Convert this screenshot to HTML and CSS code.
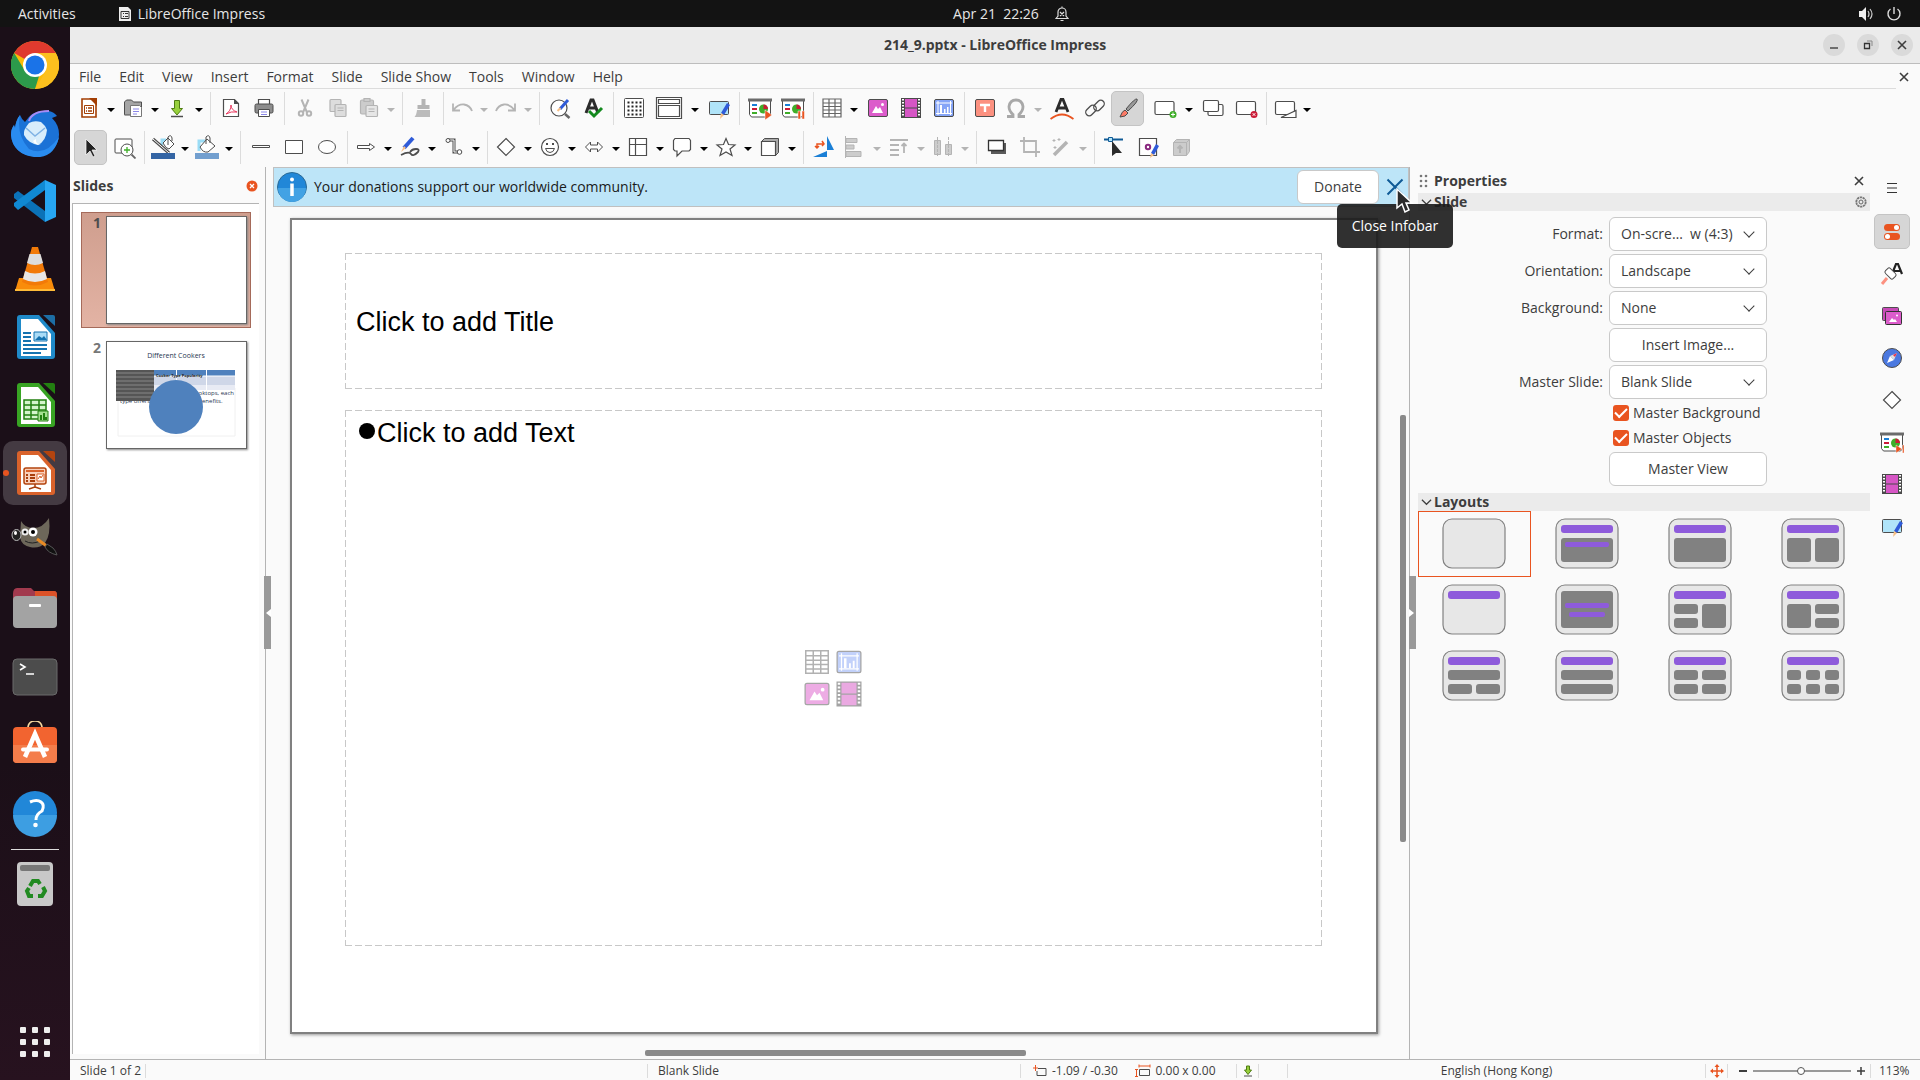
FILE: index.html
```html
<!DOCTYPE html>
<html lang="en">
<head>
  <meta charset="UTF-8" />
  <meta name="viewport" content="width=device-width, initial-scale=1.0" />
  <title>214_9.pptx - LibreOffice Impress</title>
  <link rel="stylesheet" href="styles.css">
</head>
<body>
  <!-- shared icons -->
  <svg class="defs" width="0" height="0">
    <defs>
      <symbol id="i-table" viewBox="0 0 24 24"><path d="M3 3h18v18H3zM3 7h18M3 10.500h18M3 14h18M3 17.500h18M9 3v18M15 3v18" fill="#fff" stroke="#666" stroke-width="1.200"/></symbol>
      <symbol id="i-image" viewBox="0 0 24 24"><rect x="2.500" y="3.500" width="19" height="17" rx="1.500" fill="#dc5ccb" stroke="#4d4d4d"/><path d="M6 17l4-7 2 3 2-2 3 6z" fill="#fff"/><circle cx="16.500" cy="8.500" r="1.500" fill="#fff"/></symbol>
      <symbol id="i-film" viewBox="0 0 24 24"><path d="M2 2h20v20H2z" fill="#4a4a4a"/><path d="M6 3h12v8.500H6zM6 12.500h12V21H6z" fill="#d656c5"/><path d="M4 3v18M20 3v18" stroke="#fff" stroke-width="2" stroke-dasharray="1.500 1.500"/></symbol>
      <symbol id="i-chart" viewBox="0 0 24 24"><rect x="2.500" y="3.500" width="19" height="17" rx="1.500" fill="#86a5f7" stroke="#4d4d4d"/><path d="M4 7h16M4 17.500h16M6 5v14M18.500 5v14" stroke="#fff" fill="none"/><path d="M8 17V9h2v8M12 17v-4h1.500v4M15 17v-6h1.500v6" fill="#fff"/></symbol>
      <symbol id="i-master" viewBox="0 0 24 24"><rect x="2.500" y="5.500" width="19" height="13" rx="1" fill="#b0e4f9" stroke="#4d4d4d"/><path d="M20 7l3 2-6 10-3-2z" fill="#2f5bd8"/><path d="M14 17l3 2-4 4z" fill="#f7bf85"/></symbol>
      <symbol id="i-screen" viewBox="0 0 24 24"><path d="M1.500 3.500v15l2 2.500h17l2-2.500v-15" fill="#fff" stroke="#4d4d4d"/><path d="M0 2.500h24v3H0z" fill="#6b6b6b"/><path d="M4 8h5v2H4z" fill="#1a7fd6"/><path d="M4 12h5v2H4z" fill="#cb1b37"/><path d="M4 16h5v2H4z" fill="#3fae29"/><circle cx="15.500" cy="13" r="4.500" fill="#3fae29"/><path d="M15.500 13V8.500A4.500 4.500 0 0 1 20 13z" fill="#cb1b37"/></symbol>
      <symbol id="i-diamond" viewBox="0 0 24 24"><path d="M12 3.500l8.500 8.500-8.500 8.500L3.500 12z" fill="#fff" stroke="#4d4d4d" stroke-width="1.200"/></symbol>
      <symbol id="i-close" viewBox="0 0 10 10"><path d="M1 1l8 8M9 1L1 9" stroke="#3d3d3d" stroke-width="1.600"/></symbol>
      <symbol id="i-chevron" viewBox="0 0 12 8"><path d="M1 1.500l5 5 5-5" fill="none" stroke="#3d3d3d" stroke-width="1.300"/></symbol>
      <symbol id="i-bin" viewBox="0 0 64 51"><rect x="1" y="1" width="62" height="49" rx="9" fill="#e7e7e7" stroke="#818181" stroke-width="1.200"/></symbol>
    </defs>
  </svg>

  <header class="topbar">
    <div class="topbar-left">
      <button>Activities</button>
      <button class="app-menu">
        <svg width="14" height="16" viewBox="0 0 14 16"><path d="M1 1h9l3 3v11H1z" fill="#eee"/><path d="M3 5.500h8v7H3z" fill="#eee" stroke="#333"/><path d="M5 7.500h1M7 7.500h3M5 10.500h1M7 10.500h3" stroke="#333"/></svg>
        LibreOffice Impress
      </button>
    </div>
    <button class="clock">Apr 21&nbsp; 22:26
      <svg width="14" height="16" viewBox="0 0 14 16" fill="none" stroke="#ddd" stroke-width="1.200"><path d="M1 12.500l2-2.500V6a4 4 0 0 1 8 0v4l2 2.500zM5.500 14.500h3M7 2V.500M5 6l4 4M9 6l-4 4"/></svg>
    </button>
    <div class="topbar-right">
      <svg width="16" height="16" viewBox="0 0 16 16"><path d="M1 5h3l4-4v14l-4-4H1z" fill="#eee"/><path d="M10 5q2 3 0 6M12 3q4 5 0 10" fill="none" stroke="#ccc" stroke-width="1.200"/></svg>
      <svg width="16" height="16" viewBox="0 0 16 16" fill="none" stroke="#ddd" stroke-width="1.400"><path d="M4.500 3a6 6 0 1 0 7 0M8 1v7"/></svg>
    </div>
  </header>

  <div class="desktop">
    <nav class="dock">
      <a href="#" aria-label="Chrome"><svg viewBox="0 0 48 48"><circle cx="24" cy="24" r="24" fill="#fbbc09"/><path d="M24 24L3.200 12A24 24 0 0 1 44.800 12z" fill="#df3a2e"/><path d="M3.200 12L14 30l10 4 5-2-5 16A24 24 0 0 1 3.200 12z" fill="#2c9a4b"/><path d="M24 12h20.800A24 24 0 0 1 24 48l11-18z" fill="#fcc01e"/><circle cx="24" cy="24" r="12" fill="#fff"/><circle cx="24" cy="24" r="9.500" fill="#1a73e8"/></svg></a>
      <a href="#" aria-label="Thunderbird"><svg viewBox="0 0 48 48"><path d="M9 6q2 5 5 7Q22 0 38 2q5 1 8 5l-5 2q7 7 7 16A24 22 0 0 1 0 26q0-6 3-10l1 3Q5 11 9 6z" fill="#1b72d6"/><path d="M9 6Q5 26 18 40q16 8 30-12-5 22-25 20Q2 45 0 26q0-6 3-10l1 3Q5 11 9 6z" fill="#2a8cf0"/><path d="M18 12q3-10 20-10" fill="none" stroke="#a88cf5" stroke-width="2"/><path d="M18 14q-6 7-5 12 4 8 14 10 8-4 9-15-2-5-6-8-7-2-12 1z" fill="#d8edfb"/><path d="M15 19l9 8 10-8" fill="none" stroke="#7fb2e4" stroke-width="1.500"/><path d="M22 32q2 4 8 4-6-1-5-6z" fill="#fff"/></svg></a>
      <a href="#" aria-label="Visual Studio Code"><svg viewBox="0 0 48 48"><path d="M3 17l4-3 27 20v11L3 21z" fill="#0b72b8"/><path d="M3 29l4 4 27-20V3L3 26z" fill="#1089d3"/><path d="M34 3l11 5v32l-11 5z" fill="#27a6f2"/></svg></a>
      <a href="#" aria-label="VLC"><svg viewBox="0 0 48 48"><path d="M8 33h32l4 13H4z" fill="#f98c0a"/><path d="M21 2h6l10 35q-13 7-26 0z" fill="#f27a08"/><path d="M18.500 9h11l2.500 9q-8 4-16 0z" fill="#ddd"/><path d="M14 26q10 5 20 0l2 8q-12 6-24 0z" fill="#e6e6e6"/><path d="M4 44h40v2H4z" fill="#ffbb38"/></svg></a>
      <a href="#" aria-label="Writer"><svg viewBox="0 0 48 48"><path d="M9 2h19l16 18v23q0 3-3 3H9q-3 0-3-3V5q0-3 3-3z" fill="#1f8ac9"/><path d="M10 6h17l13 15v22H10z" fill="#fff"/><path d="M32 2h10q2 0 2 2v9z" fill="#1d6ea5"/><path d="M12 20h8M12 24h8M12 28h8M12 32h24M12 36h24M12 40h18" stroke="#1573b0" stroke-width="2"/><path d="M23 19h13v9H23z" fill="#aadcf7" stroke="#1573b0"/><path d="M24 27l4-4 3 2 2-2 3 4z" fill="#1573b0"/></svg></a>
      <a href="#" aria-label="Calc"><svg viewBox="0 0 48 48"><path d="M9 2h19l16 18v23q0 3-3 3H9q-3 0-3-3V5q0-3 3-3z" fill="#38a423"/><path d="M10 6h17l13 15v22H10z" fill="#fff"/><path d="M32 2h10q2 0 2 2v9z" fill="#238011"/><path d="M13 19h22v19H13zM13 24h22M13 29h22M13 34h22M20 19v19M28 19v19" fill="#d5f5cc" stroke="#238011" stroke-width="1.500"/><path d="M27 30h10v10H27z" fill="#a5e090" stroke="#238011"/><path d="M30 39v-5M33 39v-7M35 39v-3" stroke="#238011" stroke-width="2"/></svg></a>
      <a href="#" class="running" aria-label="Impress"><svg viewBox="0 0 48 48"><path d="M9 2h19l16 18v23q0 3-3 3H9q-3 0-3-3V5q0-3 3-3z" fill="#d9622b"/><path d="M10 6h17l13 15v22H10z" fill="#fff"/><path d="M32 2h10q2 0 2 2v9z" fill="#b3440f"/><rect x="13" y="19" width="22" height="16" rx="2" fill="#f9d0bb" stroke="#b3440f" stroke-width="1.500"/><path d="M15 22h18" stroke="#d9622b" stroke-width="2"/><path d="M19 26h5M19 29h5M19 32h5M15 26h2M15 29h2M15 32h2" stroke="#a83e0c" stroke-width="2"/><path d="M26 25h7v7h-7zM27 30l2-3 1 2 2-3" fill="#fff" stroke="#d9622b"/><path d="M24 35v3l-6 2M24 38l6 2" fill="none" stroke="#a83e0c" stroke-width="1.500"/></svg></a>
      <a href="#" aria-label="GIMP"><svg viewBox="0 0 48 48"><path d="M10 4q4 7 12 7 10 0 16-10 2 17-4 25-6 6-15 4-9-2-10-10z" fill="#6d675a"/><circle cx="14" cy="15" r="3.500" fill="#eee"/><circle cx="22" cy="15" r="4.500" fill="#fff"/><circle cx="14" cy="15" r="1.500"/><circle cx="22" cy="15" r="2"/><ellipse cx="5.500" cy="18" rx="4.500" ry="5.500" fill="#222" stroke="#bbb"/><ellipse cx="4.500" cy="16" rx="1.500" ry="2" fill="#fff"/><path d="M14 24q7 4 15 0" fill="none" stroke="#222"/><path d="M26 22l11 8" stroke="#e78a25" stroke-width="3"/><path d="M36 27l6 4q3 3 4 7-9-2-12-8z" fill="#111" stroke="#555"/></svg></a>
      <a href="#" aria-label="Files"><svg viewBox="0 0 48 48"><path d="M2 9q0-6 4-6h14l3 3h20q3 0 3 4v10H2z" fill="#a23a4e"/><path d="M24 6h19q3 0 3 4v5H24z" fill="#dc5228"/><rect x="2" y="11" width="44" height="32" rx="4" fill="#a3a3a3"/><rect x="18" y="19" width="12" height="3" rx="1" fill="#fff"/></svg></a>
      <a href="#" aria-label="Terminal"><svg viewBox="0 0 48 48"><rect x="2" y="6" width="44" height="36" rx="4" fill="#4c4c4c" stroke="#6a6a6a"/><path d="M9 11l5 3-5 3M15 21h8" fill="none" stroke="#fff" stroke-width="1.600"/></svg></a>
      <a href="#" aria-label="Software"><svg viewBox="0 0 48 48"><path d="M17 10V6q1-6 7-6t7 6v4" fill="none" stroke="#f5d8a0" stroke-width="1.600"/><rect x="2" y="6" width="44" height="36" rx="4" fill="#f26430"/><path d="M2 24h44v14q0 4-4 4H6q-4 0-4-4z" fill="#f47d4b"/><path d="M14 36l10-23 10 23" fill="none" stroke="#fff" stroke-width="4.500"/><path d="M12 28.500h24" stroke="#fff" stroke-width="4" stroke-linecap="round"/></svg></a>
      <a href="#" aria-label="Help"><svg viewBox="0 0 48 48"><circle cx="24" cy="24" r="22" fill="#2187d8"/><path d="M2 26h44a22 22 0 0 1-44 0z" fill="#3d9ee2"/><path d="M19 13q7-3 11 0t1 9q-6 3-6 9" fill="none" stroke="#fff" stroke-width="3"/><circle cx="24.500" cy="36" r="2.300" fill="#fff"/></svg></a>
      <hr>
      <a href="#" aria-label="Trash"><svg viewBox="0 0 48 48"><rect x="6" y="2" width="36" height="44" rx="4" fill="#c8c8c8"/><rect x="9" y="5" width="30" height="6" rx="2" fill="#777"/><g fill="none" stroke="#218a21" stroke-width="4"><path d="M19 26l3-5h5l2 3M32 27l2 4-3 5h-4M22 36h-4l-2-5 2-3"/></g></svg></a>
      <a href="#" class="apps" aria-label="Show Applications"><svg viewBox="0 0 48 48"><g fill="#eee"><rect x="9" y="9" width="6" height="6" rx="1"/><rect x="21" y="9" width="6" height="6" rx="1"/><rect x="33" y="9" width="6" height="6" rx="1"/><rect x="9" y="21" width="6" height="6" rx="1"/><rect x="21" y="21" width="6" height="6" rx="1"/><rect x="33" y="21" width="6" height="6" rx="1"/><rect x="9" y="33" width="6" height="6" rx="1"/><rect x="21" y="33" width="6" height="6" rx="1"/><rect x="33" y="33" width="6" height="6" rx="1"/></g></svg></a>
    </nav>

    <div class="window">
      <div class="titlebar">
        <h1>214_9.pptx - LibreOffice Impress</h1>
        <div class="window-buttons">
          <button aria-label="Minimize"><svg width="10" height="10" viewBox="0 0 10 10"><path d="M1 8h8" stroke="#333" stroke-width="1.300"/></svg></button>
          <button aria-label="Restore"><svg width="10" height="10" viewBox="0 0 10 10"><path d="M1.500 3.500h5v5h-5z" fill="none" stroke="#333" stroke-width="1.300"/><path d="M4 1h5v5" fill="none" stroke="#888"/></svg></button>
          <button aria-label="Close"><svg width="10" height="10"><use href="#i-close"/></svg></button>
        </div>
      </div>

      <div class="menubar">
        <div class="menus">
          <button>File</button><button>Edit</button><button>View</button><button>Insert</button><button>Format</button><button>Slide</button><button>Slide Show</button><button>Tools</button><button>Window</button><button>Help</button>
        </div>
        <button class="close-doc" aria-label="Close Document"><svg width="10" height="10"><use href="#i-close"/></svg></button>
      </div>

      <!-- standard toolbar -->
      <div class="toolbar">
        <div class="split"><button aria-label="New"><svg viewBox="0 0 24 24"><path d="M5 3h10l4 4v14H5z" fill="#fff" stroke="#a33e03" stroke-width="1.600"/><path d="M12 2h8v8z" fill="#a33e03"/><path d="M7.500 9.500h9v8h-9z" fill="none" stroke="#a33e03"/><path d="M9 12h1M11 12h4M9 15h1M11 15h4" stroke="#a33e03" stroke-width="1.400"/></svg></button><button class="arrow" aria-label="New menu"></button></div>
        <div class="split"><button aria-label="Open"><svg viewBox="0 0 24 24"><path d="M3.500 18.500V6l2-2h5l2 2h8v13h-17z" fill="#a5a5a5" stroke="#4d4d4d"/><path d="M9.500 9.500h9l2 2v9h-11z" fill="#fff" stroke="#777"/><path d="M12 13h6M12 15.500h6M12 18h4" stroke="#8b86e8"/></svg></button><button class="arrow" aria-label="Open menu"></button></div>
        <div class="split"><button aria-label="Save"><svg viewBox="0 0 24 24"><path d="M9.500 4.500h5v8h3L12 19l-5.500-6.500h3z" fill="#97d03c" stroke="#4f7d12"/><path d="M6 20.500h12" stroke="#4d4d4d" stroke-width="1.500"/></svg></button><button class="arrow" aria-label="Save menu"></button></div>
        <i class="sep"></i>
        <button aria-label="Export as PDF"><svg viewBox="0 0 24 24"><path d="M4.500 3.500h11l4 4v13h-15z" fill="#fff" stroke="#4d4d4d" stroke-width="1.200"/><path d="M15 3l5 5h-5z" fill="#4d4d4d"/><path d="M7 18q5-3 5-9 0 5 6 7-6-1-11 2z" fill="none" stroke="#e8365d"/></svg></button>
        <button aria-label="Print"><svg viewBox="0 0 24 24"><path d="M6.500 9V3.500h11V9" fill="#fff" stroke="#4d4d4d" stroke-width="1.200"/><rect x="3" y="8" width="18" height="9" rx="1.500" fill="#8d8d8d" stroke="#4d4d4d"/><path d="M6.500 13.500h11v7h-11z" fill="#fff" stroke="#4d4d4d"/><path d="M9 16h6M9 18.500h6" stroke="#8b86e8"/></svg></button>
        <i class="sep"></i>
        <button disabled aria-label="Cut"><svg viewBox="0 0 24 24" fill="none" stroke="#b4b4b4" stroke-width="2"><path d="M8.500 3.500l5.500 13M15.500 3.500L10 16.500"/><circle cx="8" cy="17.500" r="2.200"/><circle cx="16" cy="17.500" r="2.200"/></svg></button>
        <button disabled aria-label="Copy"><svg viewBox="0 0 24 24" fill="#ddd" stroke="#b4b4b4" stroke-width="1.200"><rect x="4" y="3.500" width="11" height="12" rx="1"/><rect x="9" y="8.500" width="11" height="12" rx="1"/><path d="M11.500 12h6M11.500 14.500h6"/></svg></button>
        <div class="split off"><button disabled aria-label="Paste"><svg viewBox="0 0 24 24" fill="#ccc" stroke="#b4b4b4" stroke-width="1.200"><rect x="3.500" y="4" width="13" height="14" rx="1.500"/><path d="M7 2.500h6v3H7z"/><rect x="9" y="9.500" width="11.500" height="11" rx="1" fill="#e6e6e6"/><path d="M11.500 13h6M11.500 15.500h6"/></svg></button><button disabled class="arrow" aria-label="Paste menu"></button></div>
        <i class="sep"></i>
        <button disabled aria-label="Clone Formatting"><svg viewBox="0 0 24 24"><path d="M10.500 3h4v6h4v4h-12V9h4z" fill="#b4b4b4"/><path d="M6 14h13v7H3.500q2-2 2.500-7z" fill="#bbb"/></svg></button>
        <i class="sep"></i>
        <div class="split off"><button disabled aria-label="Undo"><svg viewBox="0 0 24 24" fill="none" stroke="#b4b4b4" stroke-width="1.800"><path d="M3 7.500v7h7M3.500 14Q8 8 14 8.500q6 1 8 6.500"/></svg></button><button disabled class="arrow" aria-label="Undo menu"></button></div>
        <div class="split off"><button disabled aria-label="Redo"><svg viewBox="0 0 24 24" fill="none" stroke="#b4b4b4" stroke-width="1.800"><path d="M21 7.500v7h-7M20.500 14Q16 8 10 8.500q-6 1-8 6.500"/></svg></button><button disabled class="arrow" aria-label="Redo menu"></button></div>
        <i class="sep"></i>
        <button aria-label="Find and Replace"><svg viewBox="0 0 24 24"><circle cx="11" cy="12" r="8" fill="#fff" stroke="#4d4d4d" stroke-width="1.200"/><path d="M17 18l4.500 4" stroke="#666" stroke-width="2.400"/><path d="M20 4l-8 9" stroke="#2f5bd8" stroke-width="3"/><path d="M12.500 12l-3 3" stroke="#f7bf85" stroke-width="2"/></svg></button>
        <button aria-label="Spelling"><svg viewBox="0 0 24 24"><path d="M5 17l5-13h2l5 13M7 12h8" fill="none" stroke="#2b2b2b" stroke-width="3"/><path d="M8 15l5 5 8-8" fill="none" stroke="#138a1e" stroke-width="3"/></svg></button>
        <i class="sep"></i>
        <button aria-label="Display Grid"><svg viewBox="0 0 24 24"><rect x="2.500" y="2.500" width="19" height="19" rx="1" fill="#fff" stroke="#4d4d4d"/><path d="M5.500 6.500h14M5.500 10.500h14M5.500 14.500h14M5.500 18.500h14" stroke="#222" stroke-width="2" stroke-dasharray="2 2"/></svg></button>
        <div class="split wide"><button aria-label="Display Views"><svg class="big" viewBox="0 0 28 24" fill="#fff" stroke="#4d4d4d" stroke-width="1.200"><path d="M1.500 1.500h25v21h-25zM3.500 3.500h21v4h-21zM3.500 9.500h21v11h-21z"/></svg></button><button class="arrow" aria-label="Views menu"></button></div>
        <button aria-label="Master Slide"><svg><use href="#i-master"/></svg></button>
        <i class="sep"></i>
        <button aria-label="Start from First Slide"><svg viewBox="0 0 24 24"><use href="#i-screen"/><path d="M17 14l7 5-7 5z" fill="#e95420" stroke="#fff" stroke-width=".5"/></svg></button>
        <button aria-label="Start from Current Slide"><svg viewBox="0 0 24 24"><use href="#i-screen"/><path d="M17 15h2.500v8H17zM21 15h2.500v8H21z" fill="#e95420" stroke="#fff" stroke-width=".5"/></svg></button>
        <i class="sep"></i>
        <div class="split"><button aria-label="Table"><svg><use href="#i-table"/></svg></button><button class="arrow" aria-label="Table menu"></button></div>
        <button aria-label="Image"><svg><use href="#i-image"/></svg></button>
        <button aria-label="Audio or Video"><svg><use href="#i-film"/></svg></button>
        <button aria-label="Chart"><svg><use href="#i-chart"/></svg></button>
        <i class="sep"></i>
        <button aria-label="Text Box"><svg viewBox="0 0 24 24"><rect x="2.500" y="3.500" width="19" height="17" rx="1.500" fill="#fc9180" stroke="#4d4d4d"/><path d="M7 9h10M12 9v7" stroke="#fff" stroke-width="2.400"/></svg></button>
        <div class="split off"><button disabled aria-label="Special Character"><svg viewBox="0 0 24 24"><path d="M3 20.500h6v-2Q5 15 5 10.500 6 4 12 4t7 6.500q0 4.500-4 8v2h6" fill="none" stroke="#a8a8a8" stroke-width="2.800"/></svg></button><button disabled class="arrow" aria-label="Special Character menu"></button></div>
        <button aria-label="Fontwork"><svg viewBox="0 0 24 24"><path d="M6 16l5-12.500h2L18 16M8 12h8" fill="none" stroke="#2b2b2b" stroke-width="2.800"/><path d="M.500 23q11.500-9 23 0" fill="none" stroke="#e95420" stroke-width="1.800"/></svg></button>
        <button aria-label="Hyperlink"><svg viewBox="0 0 24 24" fill="none" stroke="#4d4d4d" stroke-width="1.300"><rect x="2" y="11" width="12" height="7" rx="3.500" transform="rotate(-45 8 14.500)"/><rect x="10" y="6" width="12" height="7" rx="3.500" transform="rotate(-45 16 9.500)"/></svg></button>
        <button class="pressed" aria-label="Show Draw Functions"><svg viewBox="0 0 24 24"><path d="M21 3q2 2-9 12l-2-2Q19 2 21 3z" fill="#999" stroke="#4d4d4d"/><path d="M9 14l3 3q-2 4-8 4 2-6 5-7z" fill="#fc7a66" stroke="#4d4d4d"/></svg></button>
        <div class="split wide"><button aria-label="New Slide"><svg class="big" viewBox="0 0 28 24"><rect x="6" y="5.500" width="19" height="13" rx="1.500" fill="#fff" stroke="#4d4d4d" stroke-width="1.200"/><circle cx="24" cy="18.500" r="3.500" fill="#3fae29"/><path d="M24 16.500v4M22 18.500h4" stroke="#fff"/></svg></button><button class="arrow" aria-label="New Slide menu"></button></div>
        <button aria-label="Duplicate Slide"><svg viewBox="0 0 24 24" fill="#fff" stroke="#4d4d4d" stroke-width="1.200"><rect x="7" y="8.500" width="15" height="11" rx="1.500"/><rect x="2.500" y="4.500" width="15" height="11" rx="1.500"/></svg></button>
        <button aria-label="Delete Slide"><svg viewBox="0 0 24 24"><rect x="2.500" y="5.500" width="19" height="13" rx="1.500" fill="#fff" stroke="#4d4d4d" stroke-width="1.200"/><circle cx="20" cy="18.500" r="3.500" fill="#cb1b37"/><path d="M18.700 17.200l2.600 2.600M21.300 17.200l-2.600 2.600" stroke="#fff"/></svg></button>
        <i class="sep"></i>
        <div class="split"><button aria-label="Slide Layout"><svg viewBox="0 0 24 24" fill="#fff" stroke="#4d4d4d" stroke-width="1.200"><rect x="2.500" y="5.500" width="19" height="13" rx="1.500"/><path d="M8 21.500l15-7v7z"/></svg></button><button class="arrow" aria-label="Layout menu"></button></div>
      </div>

      <!-- drawing toolbar -->
      <div class="toolbar">
        <button class="pressed" aria-label="Select"><svg viewBox="0 0 24 24"><path d="M7 4v16l4-4 3 6 2-1-3-6h5z" fill="#222" stroke="#fff" stroke-width=".7"/></svg></button>
        <button aria-label="Zoom and Pan"><svg viewBox="0 0 24 24"><rect x="3" y="4" width="17" height="14" rx="1" fill="#fff" stroke="#4d4d4d"/><circle cx="15" cy="15" r="6" fill="#fff" stroke="#4d4d4d"/><path d="M15 12v6M12 15h6" stroke="#3fae29" stroke-width="1.300"/><path d="M19.500 19.500l4 4" stroke="#666" stroke-width="1.800"/></svg></button>
        <i class="sep"></i>
        <div class="split"><button aria-label="Line Color"><svg viewBox="0 0 24 24"><path d="M11 10V5h4" fill="none" stroke="#9adcf5" stroke-width="3"/><path d="M2 4l16 14" stroke="#4d4d4d" stroke-width="3"/><path d="M2 4l16 14" stroke="#fff"/><path d="M12 8l5-5 6 6-5 5q-3 0-6-6zM17 10V2q3-3 4 1v3" fill="#fff" stroke="#4d4d4d"/><path d="M0 18h24v6H0z" fill="#3465a4"/></svg></button><button class="arrow" aria-label="Line Color menu"></button></div>
        <div class="split"><button aria-label="Fill Color"><svg viewBox="0 0 24 24"><path d="M4 16V6h6" fill="none" stroke="#9adcf5" stroke-width="3"/><path d="M5 12l7-8 8 7-7 6q-5 1-8-5zM11 9V2q3-3 4 1v5" fill="#fff" stroke="#4d4d4d"/><path d="M0 18h24v6H0z" fill="#729fcf"/></svg></button><button class="arrow" aria-label="Fill Color menu"></button></div>
        <i class="sep"></i>
        <button aria-label="Insert Line"><svg viewBox="0 0 24 24"><path d="M3.500 10.500h17v2h-17z" fill="#fff" stroke="#4d4d4d"/></svg></button>
        <button aria-label="Rectangle"><svg viewBox="0 0 24 24"><path d="M3.500 5.500h17v13h-17z" fill="#fff" stroke="#4d4d4d"/></svg></button>
        <button aria-label="Ellipse"><svg viewBox="0 0 24 24"><ellipse cx="12" cy="12" rx="8.500" ry="6.500" fill="#fff" stroke="#4d4d4d"/></svg></button>
        <i class="sep"></i>
        <div class="split"><button aria-label="Lines and Arrows"><svg viewBox="0 0 24 24"><path d="M3.500 10.500h12v-2l5 3.500-5 3.500v-2h-12z" fill="#fff" stroke="#4d4d4d"/></svg></button><button class="arrow" aria-label="Lines menu"></button></div>
        <div class="split"><button aria-label="Curves"><svg viewBox="0 0 24 24"><path d="M15 3L6 13" stroke="#2f5bd8" stroke-width="4"/><path d="M6 11l2 2-5 4z" fill="#f7bf85"/><path d="M3 20q8-4 10-1t7-2q2-3-2-3t-6 3" fill="none" stroke="#4d4d4d" stroke-width="1.800"/></svg></button><button class="arrow" aria-label="Curves menu"></button></div>
        <div class="split"><button aria-label="Connectors"><svg viewBox="0 0 24 24"><path d="M6 5h6v12h6" fill="none" stroke="#4d4d4d" stroke-width="3"/><path d="M6 5h6v12h6" fill="none" stroke="#fff"/><circle cx="6" cy="5.500" r="2" fill="#fff" stroke="#4d4d4d"/><circle cx="17.500" cy="17" r="2.300" fill="#fff" stroke="#4d4d4d"/></svg></button><button class="arrow" aria-label="Connectors menu"></button></div>
        <i class="sep"></i>
        <div class="split"><button aria-label="Basic Shapes"><svg><use href="#i-diamond"/></svg></button><button class="arrow" aria-label="Basic Shapes menu"></button></div>
        <div class="split"><button aria-label="Symbol Shapes"><svg viewBox="0 0 24 24"><circle cx="12" cy="12" r="8.500" fill="#fff" stroke="#4d4d4d" stroke-width="1.200"/><path d="M7.500 13.500h9q-1 4-4.500 4t-4.500-4z" fill="#fff" stroke="#4d4d4d"/><path d="M9 8v2M15 8v2" stroke="#4d4d4d" stroke-width="2"/></svg></button><button class="arrow" aria-label="Symbol Shapes menu"></button></div>
        <div class="split"><button aria-label="Block Arrows"><svg viewBox="0 0 24 24"><path d="M3.500 12l5-5v3h7V7l5 5-5 5v-3h-7v3z" fill="#fff" stroke="#4d4d4d"/></svg></button><button class="arrow" aria-label="Block Arrows menu"></button></div>
        <div class="split"><button aria-label="Flowchart"><svg viewBox="0 0 24 24"><path d="M3.500 3.500h17v17h-17zM3.500 9.500h17M9.500 3.500v17" fill="#fff" stroke="#4d4d4d" stroke-width="1.200"/></svg></button><button class="arrow" aria-label="Flowchart menu"></button></div>
        <div class="split"><button aria-label="Callouts"><svg viewBox="0 0 24 24"><path d="M5 3.500h14l1.500 2v9L19 16h-7l-5 5v-5H5l-1.500-1.500v-9z" fill="#fff" stroke="#4d4d4d" stroke-width="1.200"/></svg></button><button class="arrow" aria-label="Callouts menu"></button></div>
        <div class="split"><button aria-label="Stars and Banners"><svg viewBox="0 0 24 24"><path d="M12 3.500l2.500 6 6.500.5-5 4 2 6.500-6-3.500-6 3.500L8 14l-5-4 6.500-.5z" fill="#fff" stroke="#4d4d4d" stroke-width="1.200"/></svg></button><button class="arrow" aria-label="Stars menu"></button></div>
        <div class="split"><button aria-label="3D Objects"><svg viewBox="0 0 24 24"><path d="M3.500 6.500l3-3h14v14l-3 3z" fill="#aaa" stroke="#4d4d4d"/><path d="M3.500 6.500h14v14h-14z" fill="#fff" stroke="#4d4d4d" stroke-width="1.200"/></svg></button><button class="arrow" aria-label="3D Objects menu"></button></div>
        <i class="sep"></i>
        <button aria-label="Rotate"><svg viewBox="0 0 24 24"><path d="M15 1v14h7zM1 22l14-6v6z" fill="#1a7fd6"/><path d="M5 13V9h6M3 11l2 2 2-2M10 6l2 3-2 2" fill="none" stroke="#e95420" stroke-width="1.500"/></svg></button>
        <div class="split off"><button disabled aria-label="Align"><svg viewBox="0 0 24 24" fill="#ccc" stroke="#b4b4b4"><path d="M2.500 1v22M3 3.500h11v4H3zM3 10h8v4H3zM3 16.500h15v5H3z"/></svg></button><button disabled class="arrow" aria-label="Align menu"></button></div>
        <div class="split off"><button disabled aria-label="Arrange"><svg viewBox="0 0 24 24" fill="none" stroke="#b4b4b4" stroke-width="1.800"><path d="M3 5h18M3 10h9M3 15h9M3 20h9M17 18V9M14.500 11L17 8.500l2.500 2.500"/></svg></button><button disabled class="arrow" aria-label="Arrange menu"></button></div>
        <div class="split off"><button disabled aria-label="Distribute"><svg viewBox="0 0 24 24" fill="#ccc" stroke="#b4b4b4"><path d="M3.500 5.500h6v14h-6zM14.500 9.500h6v10h-6z"/><path d="M6.500 2v20M17.500 2v20" stroke-dasharray="3 1"/></svg></button><button disabled class="arrow" aria-label="Distribute menu"></button></div>
        <i class="sep"></i>
        <button aria-label="Shadow"><svg viewBox="0 0 24 24"><path d="M6 8h15v11H6z" fill="#5a5a5a"/><path d="M3.500 5.500h15v10h-15z" fill="#fff" stroke="#333" stroke-width="1.300"/></svg></button>
        <button disabled aria-label="Crop"><svg viewBox="0 0 24 24" fill="none" stroke="#b4b4b4" stroke-width="1.800"><path d="M2 6h16v16M6 2v15h16"/></svg></button>
        <div class="split off"><button disabled aria-label="Filter"><svg viewBox="0 0 24 24" stroke="#b4b4b4"><path d="M5 20L18 7" stroke-width="3.500"/><path d="M5 4v3M3.500 5.500h3M10 3v3M8.500 4.500h3M6 11v3M4.500 12.500h3"/></svg></button><button disabled class="arrow" aria-label="Filter menu"></button></div>
        <i class="sep"></i>
        <button aria-label="Edit Points"><svg viewBox="0 0 24 24"><path d="M1 4.500h19" stroke="#0f5a96" stroke-width="2"/><path d="M5.500 2.500h4v4h-4z" fill="#b0e4f9" stroke="#0f5a96"/><path d="M9 6v15l4-3h6z" fill="#2b2b2b"/></svg></button>
        <button aria-label="Glue Points"><svg viewBox="0 0 24 24"><path d="M3.500 3.500h17v17h-17z" fill="#fff" stroke="#4d4d4d" stroke-width="1.200"/><circle cx="12" cy="12" r="2.200" fill="none" stroke="#8b2a80" stroke-width="2"/><path d="M20 9l3 2-5 9-3-2z" fill="#2f5bd8"/><path d="M15 18l3 2-4 3z" fill="#f7bf85"/></svg></button>
        <button disabled aria-label="Extrusion"><svg viewBox="0 0 24 24" fill="#ccc" stroke="#b4b4b4"><path d="M4.500 7.500l3-3h13v12l-3 4h-13zM4.500 7.500h13v13M17.500 7.500l3-3"/><path d="M11 18v-7M8.500 13.500L11 11l2.500 2.500" fill="none" stroke-width="2"/></svg></button>
      </div>

      <main class="workspace">
        <aside class="slides">
          <div class="slides-head">
            <h2>Slides</h2>
            <button aria-label="Close Slides"><svg width="12" height="12" viewBox="0 0 12 12"><circle cx="6" cy="6" r="5.500" fill="#e95420"/><path d="M4 4l4 4M8 4l-4 4" stroke="#fff" stroke-width="1.300"/></svg></button>
          </div>
          <ol class="slide-list">
            <li class="current"><span>1</span><div class="thumb"></div></li>
            <li><span>2</span><div class="thumb">
              <svg viewBox="0 0 139 105">
                <text x="69" y="16" text-anchor="middle" font-size="7" fill="#1f3550">Different Cookers</text>
                <path d="M11 46h117v48H11z" fill="none" stroke="#f0f0f0"/>
                <path d="M47 28h81v6H47z" fill="#4f81bd"/><path d="M47 34h81v9H47z" fill="#cfd7e8"/><path d="M47 43h81v5H47z" fill="#e8ebf4"/>
                <path d="M69.500 28v20M99.500 28v20M47 34h81" stroke="#fff"/>
                <text x="49" y="35" font-size="4" font-weight="bold" fill="#222">Cooker Type Popularity</text>
                <text x="127" y="53" text-anchor="end" font-size="6" fill="#1f3550">gas, cooktops, each</text>
                <text x="13" y="61" font-size="6" fill="#1f3550">type offers</text>
                <text x="95" y="61" font-size="6" fill="#1f3550">enefits.</text>
                <path d="M9 28h38v31H9z" fill="#555"/>
                <path d="M9 31h38M9 35h38M9 39h38M9 43h38M9 47h38M9 51h38M9 55h38" stroke="#888"/>
                <circle cx="69" cy="65" r="27" fill="#4f81bd"/>
              </svg>
            </div></li>
          </ol>
        </aside>

        <div class="splitter left"><button aria-label="Hide slides pane"></button></div>

        <section class="editor">
          <div class="infobar">
            <svg class="info-icon" width="30" height="30" viewBox="0 0 30 30"><circle cx="15" cy="15" r="14.500" fill="#2187d8" stroke="#2b6a96"/><path d="M1 16h28a14 14 0 0 1-28 0z" fill="#42a2e4"/><circle cx="15" cy="7.500" r="2" fill="#fff"/><path d="M15 11.500V24" stroke="#fff" stroke-width="3.500"/></svg>
            <p>Your donations support our worldwide community.</p>
            <button class="btn donate">Donate</button>
            <button class="close-info" aria-label="Close Infobar"><svg width="18" height="18" viewBox="0 0 18 18"><path d="M1.500 1.500l15 15M16.500 1.500l-15 15" stroke="#0f5a96" stroke-width="2"/></svg>
              <svg class="pointer" width="18" height="26" viewBox="0 0 18 26"><path d="M1 1v19l5-4 3 8 4-2-3-7h6z" fill="#2b2b2b" stroke="#fff" stroke-width="1.500"/></svg>
            </button>
            <div class="tooltip" role="tooltip">Close Infobar</div>
          </div>
          <div class="canvas">
            <div class="page">
              <div class="holder title-holder">Click to add Title</div>
              <div class="holder text-holder">
                <p><svg width="17" height="17" viewBox="0 0 17 17"><circle cx="8" cy="8" r="8"/></svg>Click to add Text</p>
                <div class="insert-icons">
                  <button aria-label="Insert Table"><svg><use href="#i-table"/></svg></button>
                  <button aria-label="Insert Chart"><svg><use href="#i-chart"/></svg></button>
                  <button aria-label="Insert Image"><svg><use href="#i-image"/></svg></button>
                  <button aria-label="Insert Audio or Video"><svg><use href="#i-film"/></svg></button>
                </div>
              </div>
            </div>
            <div class="vscroll"></div>
            <div class="hscroll"></div>
          </div>
        </section>

        <div class="splitter right"><button aria-label="Hide sidebar"></button></div>

        <aside class="deck">
          <div class="deck-head">
            <svg width="10" height="14" viewBox="0 0 10 14"><g fill="#777"><circle cx="2" cy="2" r="1.300"/><circle cx="7" cy="2" r="1.300"/><circle cx="2" cy="7" r="1.300"/><circle cx="7" cy="7" r="1.300"/><circle cx="2" cy="12" r="1.300"/><circle cx="7" cy="12" r="1.300"/></g></svg>
            <h2>Properties</h2>
            <button aria-label="Close Sidebar Deck"><svg width="10" height="10"><use href="#i-close"/></svg></button>
          </div>
          <div class="section-head">
            <svg width="11" height="8"><use href="#i-chevron"/></svg>
            <h3>Slide</h3>
            <button aria-label="More Options"><svg width="12" height="12" viewBox="0 0 12 12"><circle cx="6" cy="6" r="4.700" fill="none" stroke="#777" stroke-width="1.800" stroke-dasharray="2.300 .6"/><circle cx="6" cy="6" r="2" fill="none" stroke="#666"/></svg></button>
          </div>
          <form class="slide-form">
            <label for="format">Format:</label>
            <div class="combo"><select id="format"><option>On-scre…&nbsp; w (4:3)</option></select></div>
            <label for="orientation">Orientation:</label>
            <div class="combo"><select id="orientation"><option>Landscape</option></select></div>
            <label for="background">Background:</label>
            <div class="combo"><select id="background"><option>None</option></select></div>
            <button type="button" class="btn">Insert Image...</button>
            <label for="master">Master Slide:</label>
            <div class="combo"><select id="master"><option>Blank Slide</option></select></div>
            <label class="check"><input type="checkbox" checked>Master Background</label>
            <label class="check"><input type="checkbox" checked>Master Objects</label>
            <button type="button" class="btn">Master View</button>
          </form>
          <div class="section-head">
            <svg width="11" height="8"><use href="#i-chevron"/></svg>
            <h3>Layouts</h3>
          </div>
          <div class="layouts">
            <button class="chosen" aria-label="Blank Slide"><svg viewBox="0 0 64 51"><use href="#i-bin"/></svg></button>
            <button aria-label="Title Slide"><svg viewBox="0 0 64 51"><use href="#i-bin"/><rect class="t" x="6" y="7" width="52" height="8" rx="3"/><rect class="b" x="6" y="20" width="52" height="24" rx="3"/><rect class="t" x="10" y="24" width="44" height="5" rx="2"/></svg></button>
            <button aria-label="Title, Content"><svg viewBox="0 0 64 51"><use href="#i-bin"/><rect class="t" x="6" y="7" width="52" height="8" rx="3"/><rect class="b" x="6" y="20" width="52" height="24" rx="3"/></svg></button>
            <button aria-label="Title and 2 Content"><svg viewBox="0 0 64 51"><use href="#i-bin"/><rect class="t" x="6" y="7" width="52" height="8" rx="3"/><rect class="b" x="6" y="20" width="24" height="24" rx="3"/><rect class="b" x="34" y="20" width="24" height="24" rx="3"/></svg></button>
            <button aria-label="Title Only"><svg viewBox="0 0 64 51"><use href="#i-bin"/><rect class="t" x="6" y="7" width="52" height="8" rx="3"/></svg></button>
            <button aria-label="Centered Text"><svg viewBox="0 0 64 51"><use href="#i-bin"/><rect class="b" x="6" y="7" width="52" height="37" rx="3"/><rect class="t" x="10" y="19" width="44" height="5" rx="2"/><rect class="t" x="14" y="28" width="36" height="5" rx="2"/></svg></button>
            <button aria-label="Title, 2 Content and Content"><svg viewBox="0 0 64 51"><use href="#i-bin"/><rect class="t" x="6" y="7" width="52" height="8" rx="3"/><rect class="b" x="6" y="20" width="24" height="10" rx="3"/><rect class="b" x="6" y="34" width="24" height="10" rx="3"/><rect class="b" x="34" y="20" width="24" height="24" rx="3"/></svg></button>
            <button aria-label="Title, Content and 2 Content"><svg viewBox="0 0 64 51"><use href="#i-bin"/><rect class="t" x="6" y="7" width="52" height="8" rx="3"/><rect class="b" x="6" y="20" width="24" height="24" rx="3"/><rect class="b" x="34" y="20" width="24" height="10" rx="3"/><rect class="b" x="34" y="34" width="24" height="10" rx="3"/></svg></button>
            <button aria-label="Title, 2 Content over Content"><svg viewBox="0 0 64 51"><use href="#i-bin"/><rect class="t" x="6" y="7" width="52" height="8" rx="3"/><rect class="b" x="6" y="20" width="52" height="10" rx="3"/><rect class="b" x="6" y="34" width="24" height="10" rx="3"/><rect class="b" x="34" y="34" width="24" height="10" rx="3"/></svg></button>
            <button aria-label="Title, Content over Content"><svg viewBox="0 0 64 51"><use href="#i-bin"/><rect class="t" x="6" y="7" width="52" height="8" rx="3"/><rect class="b" x="6" y="20" width="52" height="10" rx="3"/><rect class="b" x="6" y="34" width="52" height="10" rx="3"/></svg></button>
            <button aria-label="Title, 4 Content"><svg viewBox="0 0 64 51"><use href="#i-bin"/><rect class="t" x="6" y="7" width="52" height="8" rx="3"/><rect class="b" x="6" y="20" width="24" height="10" rx="3"/><rect class="b" x="34" y="20" width="24" height="10" rx="3"/><rect class="b" x="6" y="34" width="24" height="10" rx="3"/><rect class="b" x="34" y="34" width="24" height="10" rx="3"/></svg></button>
            <button aria-label="Title, 6 Content"><svg viewBox="0 0 64 51"><use href="#i-bin"/><rect class="t" x="6" y="7" width="52" height="8" rx="3"/><rect class="b" x="6" y="20" width="14" height="10" rx="3"/><rect class="b" x="25" y="20" width="14" height="10" rx="3"/><rect class="b" x="44" y="20" width="14" height="10" rx="3"/><rect class="b" x="6" y="34" width="14" height="10" rx="3"/><rect class="b" x="25" y="34" width="14" height="10" rx="3"/><rect class="b" x="44" y="34" width="14" height="10" rx="3"/></svg></button>
          </div>
        </aside>

        <nav class="tabs">
          <button aria-label="Sidebar Settings"><svg viewBox="0 0 24 24"><path d="M7 5.500h10M7 10h10M7 14.500h10" stroke="#333" stroke-width="1.200"/></svg></button>
          <button class="pressed" aria-label="Properties"><svg viewBox="0 0 24 24"><rect x="4" y="4" width="16" height="7" rx="3.500" fill="#e95420"/><rect x="4" y="13" width="16" height="7" rx="3.500" fill="#e95420"/><circle cx="16.500" cy="7.500" r="2.500" fill="#fff"/><circle cx="7.500" cy="16.500" r="2.500" fill="#fff"/></svg></button>
          <button aria-label="Slide Transition"><svg viewBox="0 0 24 24"><path d="M12 12l4-10h2l4 10M14 9h6" fill="none" stroke="#222" stroke-width="2.200"/><rect x="5" y="8" width="11" height="7" rx="2" transform="rotate(45 10.500 11.500)" fill="#fff" stroke="#4d4d4d"/><path d="M2 22l5-6" stroke="#fc9180" stroke-width="3"/></svg></button>
          <button aria-label="Gallery"><svg viewBox="0 0 24 24"><rect x="2.500" y="3.500" width="16" height="13" rx="1" fill="#c84ab8" stroke="#4d4d4d"/><rect x="5.500" y="7.500" width="16" height="13" rx="1" fill="#dc5ccb" stroke="#333"/><path d="M9 18l3-4 2 2 1-1 2 3z" fill="#fff"/><circle cx="17" cy="11.500" r="1" fill="#fff"/></svg></button>
          <button aria-label="Navigator"><svg viewBox="0 0 24 24"><circle cx="12" cy="12" r="9.500" fill="#4a78e0" stroke="#4d4d4d"/><path d="M7 17l3-7 4 4z" fill="#fff"/><path d="M17 7l-7 3 4 4z" fill="#ddd"/><path d="M17 7l-4 2 2 2z" fill="#e8304a"/></svg></button>
          <button aria-label="Shapes"><svg><use href="#i-diamond"/></svg></button>
          <button aria-label="Animation"><svg viewBox="0 0 24 24"><use href="#i-screen"/><path d="M16 15l6 4-6 4zM22.500 15h1.500v8h-1.500z" fill="#e95420" stroke="#fff" stroke-width=".4"/></svg></button>
          <button aria-label="Media"><svg><use href="#i-film"/></svg></button>
          <button aria-label="Master Slides"><svg><use href="#i-master"/></svg></button>
        </nav>
      </main>

      <footer class="statusbar">
        <span>Slide 1 of 2</span>
        <span></span>
        <span>Blank Slide</span>
        <span class="coords">
          <svg width="14" height="12" viewBox="0 0 14 12"><path d="M5 3.500h8v7H4V6" fill="none" stroke="#4d4d4d"/><path d="M0 3h5M2.500 0v6" stroke="#e95420"/></svg>
          <span>-1.09 / -0.30</span>
          <svg width="16" height="14" viewBox="0 0 16 14"><path d="M4.500 5.500h10v6h-10z" fill="none" stroke="#4d4d4d"/><path d="M4 2h11M4 .5v3M15 .5v3M1.500 5v8M0 5.500h3M0 12.500h3" stroke="#e95420"/></svg>
          <span>0.00 x 0.00</span>
        </span>
        <span class="center"><svg width="12" height="12" viewBox="0 0 12 12"><path d="M4.500 1h3v4h2L6 9.500 2.500 5h2z" fill="#97d03c" stroke="#4f7d12"/><path d="M2 11h8" stroke="#4d4d4d"/></svg></span>
        <span></span>
        <span class="lang">English (Hong Kong)</span>
        <span class="center"><svg width="14" height="14" viewBox="0 0 14 14"><path d="M7 1v12M1 7h12" stroke="#e95420" stroke-width="1.500"/><path d="M7 0l2.500 3h-5zM7 14l2.500-3h-5zM0 7l3-2.500v5zM14 7l-3-2.500v5z" fill="#e95420"/></svg></span>
        <span class="zoom"><button aria-label="Zoom Out"><svg width="8" height="8" viewBox="0 0 8 8"><path d="M0 4h8" stroke="#3d3d3d" stroke-width="2"/></svg></button><input type="range" min="0" max="100" value="49" aria-label="Zoom"><button aria-label="Zoom In"><svg width="8" height="8" viewBox="0 0 8 8"><path d="M0 4h8M4 0v8" stroke="#3d3d3d" stroke-width="1.500"/></svg></button></span>
        <span class="percent">113%</span>
      </footer>
    </div>
  </div>
</body>
</html>
```
FILE: styles.css
```css
* {
  box-sizing: border-box;
}
body {
  margin: 0;
  height: 100vh;
  display: flex;
  flex-direction: column;
  overflow: hidden;
  font: 14px/20px "Open Sans", sans-serif;
  color: #3d3d3d;
  background: #fafafa;
}
h1, h2, h3, p, ol {
  margin: 0;
  padding: 0;
}
h1, h2, h3 {
  font-size: 14px;
  font-weight: bold;
}
button {
  margin: 0;
  padding: 0;
  border: none;
  background: none;
  font: inherit;
  color: inherit;
  cursor: pointer;
}
svg {
  display: block;
  flex: none;
}
.defs {
  position: absolute;
}

/* top bar */
.topbar {
  display: grid;
  grid-template-columns: 1fr auto 1fr;
  align-items: center;
  height: 27px;
  padding: 0 18px;
  background: #131313;
  color: #e6e6e6;
}
.topbar-left, .topbar-right {
  display: flex;
  align-items: center;
}
.topbar-left {
  gap: 42px;
}
.app-menu, .clock {
  display: flex;
  align-items: center;
  gap: 6px;
}
.clock {
  gap: 16px;
  padding-left: 102px;
}
.topbar-right {
  justify-content: flex-end;
  gap: 12px;
}
.desktop {
  flex: 1;
  display: flex;
  min-height: 0;
}

/* dock */
.dock {
  width: 70px;
  flex: none;
  display: flex;
  flex-direction: column;
  align-items: center;
  padding: 6px 3px;
  background: linear-gradient(#1b0f18 70%, #27121f);
}
.dock a {
  position: relative;
  width: 64px;
  height: 64px;
  flex: none;
  margin-bottom: 4px;
  padding: 8px;
  border-radius: 10px;
}
.dock hr {
  width: 48px;
  height: 1px;
  flex: none;
  margin: 0 0 2px;
  border: none;
  background: #ddd;
}
.dock .apps {
  margin-top: auto;
  margin-bottom: 0;
}
.dock .running {
  background: #443a42;
}
.running::before {
  content: "";
  position: absolute;
  left: 0;
  top: 29px;
  width: 6px;
  height: 6px;
  border-radius: 50%;
  background: #e95420;
}

/* window */
.window {
  flex: 1;
  min-width: 0;
  display: flex;
  flex-direction: column;
}
.titlebar {
  display: flex;
  align-items: center;
  justify-content: center;
  position: relative;
  height: 37px;
  background: #ebebeb;
  border-bottom: 1px solid #bdbdbd;
}
.window-buttons {
  position: absolute;
  right: 7px;
  display: flex;
  gap: 12px;
}
.window-buttons button {
  width: 22px;
  height: 22px;
  padding: 6px;
  border-radius: 50%;
  background: #dadada;
}
.menubar {
  display: flex;
  height: 25px;
}
.menus {
  flex: 1;
  display: flex;
  align-items: center;
  padding-top: 2px;
  border-bottom: 1px solid #dcdcdc;
}
.menus button {
  padding: 0 9px;
}
.close-doc {
  width: 24px;
  padding-left: 3px;
}

/* toolbars */
.toolbar {
  display: flex;
  align-items: center;
  height: 39px;
  padding: 0 0 1px 4px;
}
.toolbar button {
  display: flex;
  align-items: center;
  justify-content: center;
  width: 33px;
  height: 35px;
}
.toolbar svg, .tabs svg {
  width: 24px;
  height: 24px;
}
.toolbar .big {
  width: 28px;
}
.split {
  display: flex;
}
.toolbar .split button {
  width: 30px;
}
.toolbar .wide button {
  width: 38px;
}
.toolbar .split .arrow {
  width: 14px;
}
.arrow::before {
  content: "";
  border: 4px solid transparent;
  border-top-color: #000;
  border-bottom: none;
  margin-top: 3px;
}
.off .arrow::before {
  border-top-color: #b4b4b4;
}
.sep {
  width: 1px;
  height: 33px;
  margin: 0 3px 0 4px;
  background: #dcdcdc;
}
.toolbar .pressed, .tabs .pressed {
  background: #d6d6d6;
  border: 1px solid #c4c4c4;
  border-radius: 5px;
}

/* workspace */
.workspace {
  flex: 1;
  display: flex;
  min-height: 0;
}
.slides {
  width: 189px;
  flex: none;
  display: flex;
  flex-direction: column;
  padding: 0 0 5px 2px;
}
.slides-head {
  display: flex;
  align-items: center;
  justify-content: space-between;
  height: 36px;
  padding: 2px 1px 0 1px;
}
.slide-list {
  flex: 1;
  list-style: none;
  padding: 8px;
  background: #fff;
  border-left: 1px solid #b4b4b4;
  border-top: 1px solid #b4b4b4;
}
.slide-list li {
  display: flex;
  justify-content: flex-end;
  gap: 5px;
  height: 116px;
  margin-bottom: 9px;
  padding: 3px;
  border: 1px solid transparent;
  font-weight: bold;
  color: #777;
}
.slide-list .current {
  background: linear-gradient(#cf9e8e, #e3b3a4);
  border-color: #a56a5a;
  color: #4d4d4d;
}
.slide-list span {
  line-height: 14px;
}
.thumb {
  width: 141px;
  height: 108px;
  background: #fff;
  border: 1px solid #666;
  box-shadow: 1px 1px 2px #888;
  font-weight: normal;
}
.splitter {
  position: relative;
  width: 13px;
  flex: none;
  z-index: 1;
}
.splitter::before {
  content: "";
  display: block;
  width: 1px;
  height: 100%;
  background: #b4b4b4;
}
.splitter button {
  position: absolute;
  top: 409px;
  left: 0;
  width: 7px;
  height: 73px;
  background: #999;
}
.splitter button::before {
  content: "";
  display: block;
  border: 4px solid transparent;
  border-right: 5px solid #fff;
  border-left: none;
}
.splitter.left {
  width: 7px;
  margin-left: 6px;
}
.splitter.left button {
  left: -1px;
}
.splitter.right {
  width: 9px;
}
.splitter.right button::before {
  border-left: 5px solid #fff;
  border-right: none;
}

.editor {
  flex: 1;
  min-width: 0;
  display: flex;
  flex-direction: column;
}
.infobar {
  position: relative;
  z-index: 2;
  display: flex;
  align-items: center;
  height: 40px;
  margin-left: 1px;
  padding: 0 4px 0 3px;
  background: #bde5f8;
  border: 1px solid #c0c0c0;
  color: #1a1a1a;
}
.infobar p {
  flex: 1;
  margin-left: 7px;
}
.btn {
  height: 34px;
  background: #fff;
  border: 1px solid #c9c9c9;
  border-radius: 6px;
  text-align: center;
}
.donate {
  width: 82px;
  color: #3d3d3d;
}
.close-info {
  position: relative;
  margin-left: 7px;
}
.pointer {
  position: absolute;
  left: 10px;
  top: 10px;
  z-index: 3;
}
.tooltip {
  position: absolute;
  top: 36px;
  right: -45px;
  width: 116px;
  height: 44px;
  line-height: 44px;
  text-align: center;
  color: #fff;
  background: rgba(25, 25, 25, 0.9);
  border-radius: 5px;
}
.canvas {
  flex: 1;
  position: relative;
  padding: 11px 31px 0 18px;
}
.page {
  display: flex;
  flex-direction: column;
  aspect-ratio: 4 / 3;
  gap: 21px;
  padding: 33px 54px 86px 53px;
  background: #fff;
  border: 2px solid #808080;
  box-shadow: 1px 1px 3px #999;
  font: 27px/36px "Liberation Sans", Arial, sans-serif;
  color: #000;
}
.holder {
  --h: repeating-linear-gradient(90deg, #c8c8c8 0 7px, transparent 7px 10px);
  --v: repeating-linear-gradient(#c8c8c8 0 7px, transparent 7px 10px);
  background: var(--h) top / 100% 1px no-repeat, var(--h) bottom / 100% 1px no-repeat, var(--v) left / 1px 100% no-repeat, var(--v) right / 1px 100% no-repeat;
}
.title-holder {
  flex: 136;
  display: flex;
  align-items: center;
  padding: 3px 0 0 11px;
}
.text-holder {
  flex: 538;
  position: relative;
  padding: 5px 14px;
}
.text-holder p {
  display: flex;
  gap: 1px;
}
.text-holder p svg {
  margin-top: 8px;
}
.insert-icons {
  position: absolute;
  top: 236px;
  left: 50%;
  margin-left: -33px;
  display: grid;
  grid-template-columns: 32px 32px;
  opacity: 0.5;
}
.insert-icons button {
  height: 32px;
  padding: 1px;
}
.insert-icons svg {
  width: 30px;
  height: 30px;
}
.vscroll, .hscroll {
  position: absolute;
  background: #8a8a8a;
  border-radius: 2px;
}
.vscroll {
  right: 3px;
  top: 208px;
  width: 6px;
  height: 427px;
}
.hscroll {
  bottom: 3px;
  left: 373px;
  width: 381px;
  height: 6px;
}

/* sidebar */
.deck {
  width: 452px;
  flex: none;
}
.deck-head {
  display: flex;
  align-items: center;
  height: 26px;
  padding: 2px 6px 0 1px;
}
.deck-head h2 {
  flex: 1;
  margin-left: 5px;
}
.section-head {
  display: flex;
  align-items: center;
  height: 18px;
  padding: 0 3px;
  background: #ebebeb;
}
.section-head h3 {
  flex: 1;
  margin-left: 2px;
}
.slide-form {
  display: grid;
  grid-template-columns: 1fr 158px;
  gap: 3px 6px;
  align-items: center;
  padding: 6px 103px 7px 0;
}
.slide-form label {
  text-align: right;
}
.slide-form .btn {
  grid-column: 2;
}
.combo {
  position: relative;
}
.combo select {
  display: block;
  width: 100%;
  height: 34px;
  padding: 0 11px;
  appearance: none;
  background: #fff;
  border: 1px solid #c9c9c9;
  border-radius: 6px;
  font: inherit;
  color: inherit;
}
.combo::after {
  content: "";
  position: absolute;
  right: 14px;
  top: 11px;
  width: 7px;
  height: 7px;
  border: solid #3d3d3d;
  border-width: 0 1px 1px 0;
  transform: rotate(45deg);
}
.slide-form .check {
  grid-column: 2;
  display: flex;
  align-items: center;
  gap: 4px;
  height: 22px;
  padding-left: 4px;
  white-space: nowrap;
}
.check input {
  display: grid;
  place-items: center;
  width: 16px;
  height: 16px;
  margin: 0;
  appearance: none;
  border-radius: 3px;
  background: #e95420;
}
.check input:checked::before {
  content: "";
  width: 10px;
  height: 5px;
  margin-top: -3px;
  border: solid #fff;
  border-width: 0 0 2px 2px;
  transform: rotate(-45deg);
}
.layouts {
  display: grid;
  grid-template-columns: repeat(4, 113px);
  grid-auto-rows: 66px;
}
.layouts button {
  display: grid;
  place-items: center;
  padding: 0 2px 2px 0;
  border: 1px solid transparent;
}
.layouts .chosen {
  border-color: #e95420;
}
.layouts svg {
  width: 64px;
  height: 51px;
}
.layouts .t {
  fill: #8e5bdb;
}
.layouts .b {
  fill: #818181;
}
.tabs {
  width: 50px;
  flex: none;
  display: flex;
  flex-direction: column;
  gap: 7px;
  padding: 5px 10px 0 4px;
}
.tabs button {
  display: grid;
  place-items: center;
  height: 35px;
}

/* status bar */
.statusbar {
  display: grid;
  grid-template-columns: 76px 502fr 373fr 216px 22px 29px 418fr 22px 143px 49px;
  align-items: center;
  height: 21px;
  padding-top: 1px;
  border-top: 1px solid #b4b4b4;
  font-size: 12px;
  line-height: 14px;
}
.statusbar > span {
  height: 14px;
  padding-left: 10px;
  border-right: 1px solid #dcdcdc;
  white-space: nowrap;
}
.statusbar > span:last-child {
  border: none;
}
.statusbar .coords, .statusbar .zoom {
  display: flex;
  align-items: center;
}
.coords svg {
  margin: 0 5px 0 2px;
}
.coords span {
  width: 82px;
}
.statusbar .center {
  display: grid;
  place-items: center;
  padding: 0;
}
.statusbar .lang {
  padding: 0;
  text-align: center;
}
.statusbar .zoom {
  padding: 0 6px 0 11px;
  gap: 6px;
}
.statusbar .percent {
  padding-left: 8px;
}
.zoom input {
  width: 98px;
  height: 14px;
  margin: 0;
  appearance: none;
  background: linear-gradient(#999, #999) center / 100% 2px no-repeat;
}
.zoom input::-webkit-slider-thumb {
  appearance: none;
  width: 8px;
  height: 8px;
  border: 1px solid #555;
  border-radius: 50%;
  background: #fff;
}
```
